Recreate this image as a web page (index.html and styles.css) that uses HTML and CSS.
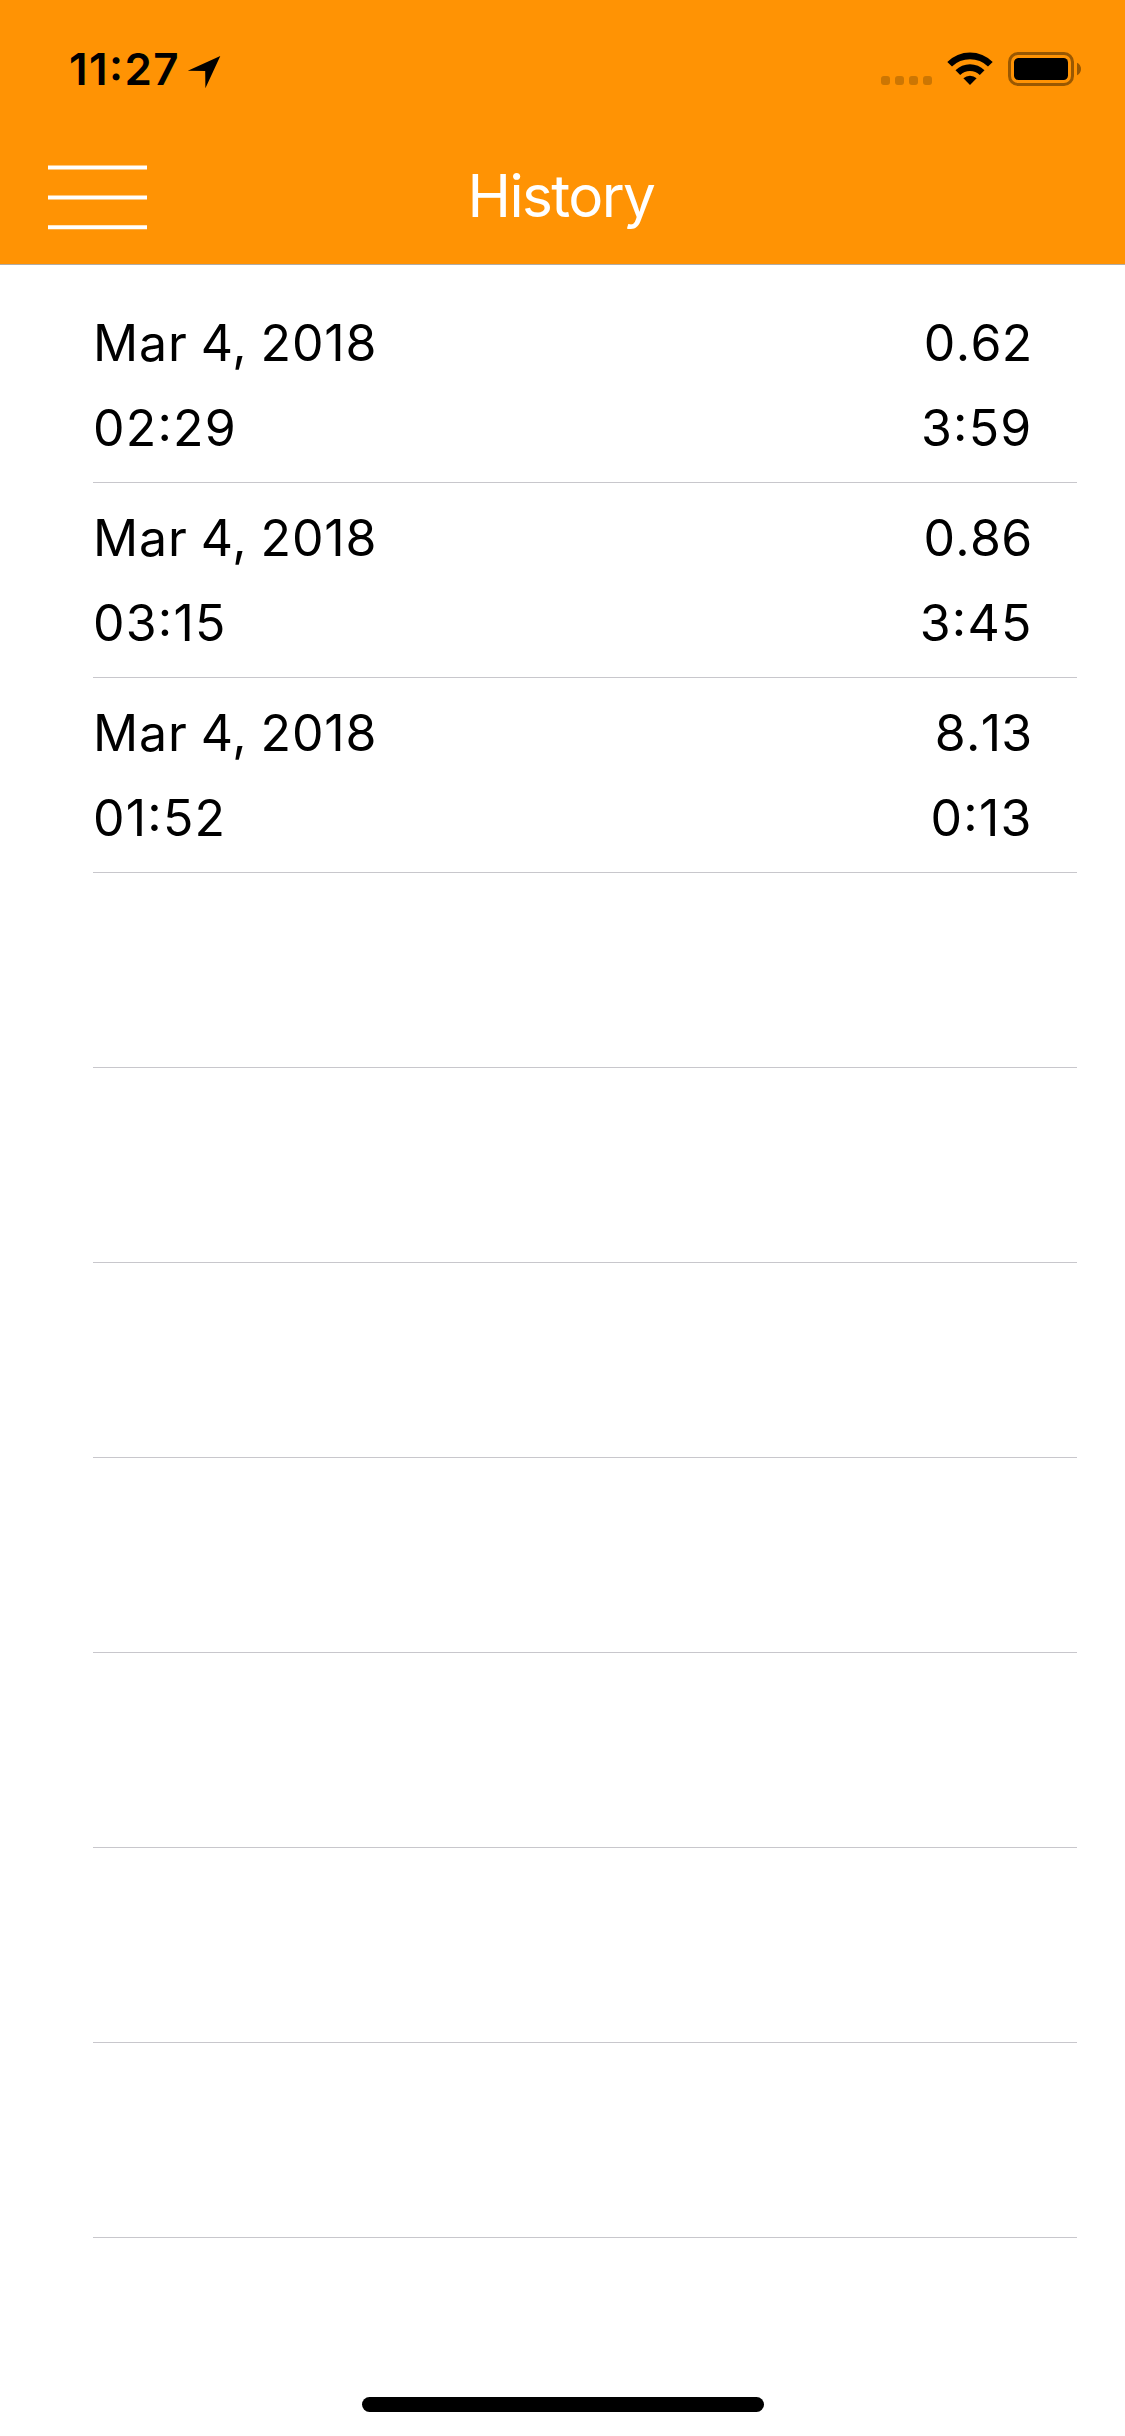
FILE: index.html
```html
<!DOCTYPE html>
<html lang="en">
<head>
<meta charset="utf-8">
<title>History</title>
<link rel="stylesheet" href="styles.css">
</head>
<body>
<div class="screen">
  <header class="header">
    <div class="status">
      <span class="clock">11:27</span>
      <svg class="location" width="34" height="34" viewBox="0 0 34 34"><path d="M33.3 1 0.8 15.8 18.2 16 18.4 33.2Z"/></svg>
      <div class="indicators">
        <svg class="signal" width="51" height="9" viewBox="0 0 51 9"><rect width="9" height="9" rx="3"/><rect x="14" width="9" height="9" rx="3"/><rect x="28" width="9" height="9" rx="3"/><rect x="42" width="9" height="9" rx="3"/></svg>
        <svg class="wifi" width="46" height="34" viewBox="0 0 46 34"><path d="M0.3 10A32 32 0 0 1 45.7 10L41 14.6A25.5 25.5 0 0 0 5 14.6Z"/><path d="M8.5 18.3A20.5 20.5 0 0 1 37.5 18.3L32.8 23A13.9 13.9 0 0 0 13.2 23Z"/><path d="M16.4 26.3A9.5 9.5 0 0 1 29.6 26.3L23 33Z"/></svg>
        <svg class="battery" width="74" height="34" viewBox="0 0 74 34"><rect class="case" x="1.5" y="1.5" width="63" height="31" rx="8.5"/><path class="nub" d="M69 10.8C71.5 11.8 73 14.2 73 17S71.5 22.2 69 23.2Z"/><rect x="6" y="6" width="54" height="22" rx="4.5"/></svg>
      </div>
    </div>
    <nav class="navbar">
      <button class="menu" aria-label="Menu"><svg width="99" height="65" viewBox="0 0 99 65"><path d="M0 .5h99v4.1H0ZM0 30.4h99v4.1H0ZM0 60.2h99v4.1H0Z"/></svg></button>
      <h1 class="title">History</h1>
    </nav>
  </header>
  <main class="list">
    <div class="row"><span class="date">Mar 4, 2018</span><span class="distance">0.62</span><span class="time">02:29</span><span class="pace">3:59</span></div>
    <div class="row"><span class="date">Mar 4, 2018</span><span class="distance">0.86</span><span class="time">03:15</span><span class="pace">3:45</span></div>
    <div class="row"><span class="date">Mar 4, 2018</span><span class="distance">8.13</span><span class="time">01:52</span><span class="pace">0:13</span></div>
    <div class="row"></div>
    <div class="row"></div>
    <div class="row"></div>
    <div class="row"></div>
    <div class="row"></div>
    <div class="row"></div>
    <div class="row"></div>
  </main>
  <footer class="footer"><div class="home"></div></footer>
</div>
</body>
</html>
```
FILE: styles.css
```css
* { box-sizing: border-box; }
body { margin: 0; background: #fff; font-family: Inter, "Liberation Sans", sans-serif; font-feature-settings: "calt" 1; color: #000; }
svg { display: block; }
.screen { width: 1125px; height: 2436px; display: flex; flex-direction: column; }
.header { height: 265px; background: #ff9304; border-bottom: 1px solid #b2aca5; }
.status { height: 132px; display: flex; align-items: flex-start; padding: 0 43px 0 69px; }
.clock { width: 118px; margin-top: 43px; font-size: 44px; font-weight: 600; line-height: 53px; letter-spacing: 1.4px; white-space: nowrap; }
.location { margin-top: 55px; }
.indicators { display: flex; margin-left: auto; margin-top: 52px; }
.signal { margin-top: 24px; margin-right: 15px; fill: #cc7603; }
.wifi { margin-right: 15px; }
.case { fill: none; stroke: #995802; stroke-width: 3; }
.nub { fill: #995802; }
.navbar { height: 132px; display: grid; grid-template-columns: 1fr auto 1fr; align-items: start; padding: 0 51px 0 48px; }
.menu { justify-self: start; margin: 33px 0 0; padding: 0; border: 0; background: none; }
.menu svg { fill: #fff; }
.title { margin: 28px 0 0; font-size: 58.5px; font-weight: 400; line-height: 71px; letter-spacing: -1.6px; color: #fff; }
.list { padding: 23px 48px 0 93px; }
.row { height: 195px; display: grid; grid-template-columns: 1fr auto; grid-auto-rows: 85px; padding: 13px 44.5px 0 0; border-bottom: 1px solid #c8c7cc; font-size: 50px; line-height: 85px; letter-spacing: 0.9px; white-space: nowrap; }
.date { word-spacing: -2px; }
.distance, .pace { text-align: right; }
.distance { letter-spacing: 0.3px; }
.time, .pace { letter-spacing: 1.2px; }
.distance, .time, .pace { font-kerning: none; }
.footer { margin-top: auto; height: 39px; display: flex; justify-content: center; }
.home { width: 402px; height: 15px; border-radius: 8px; background: #000; }
```
